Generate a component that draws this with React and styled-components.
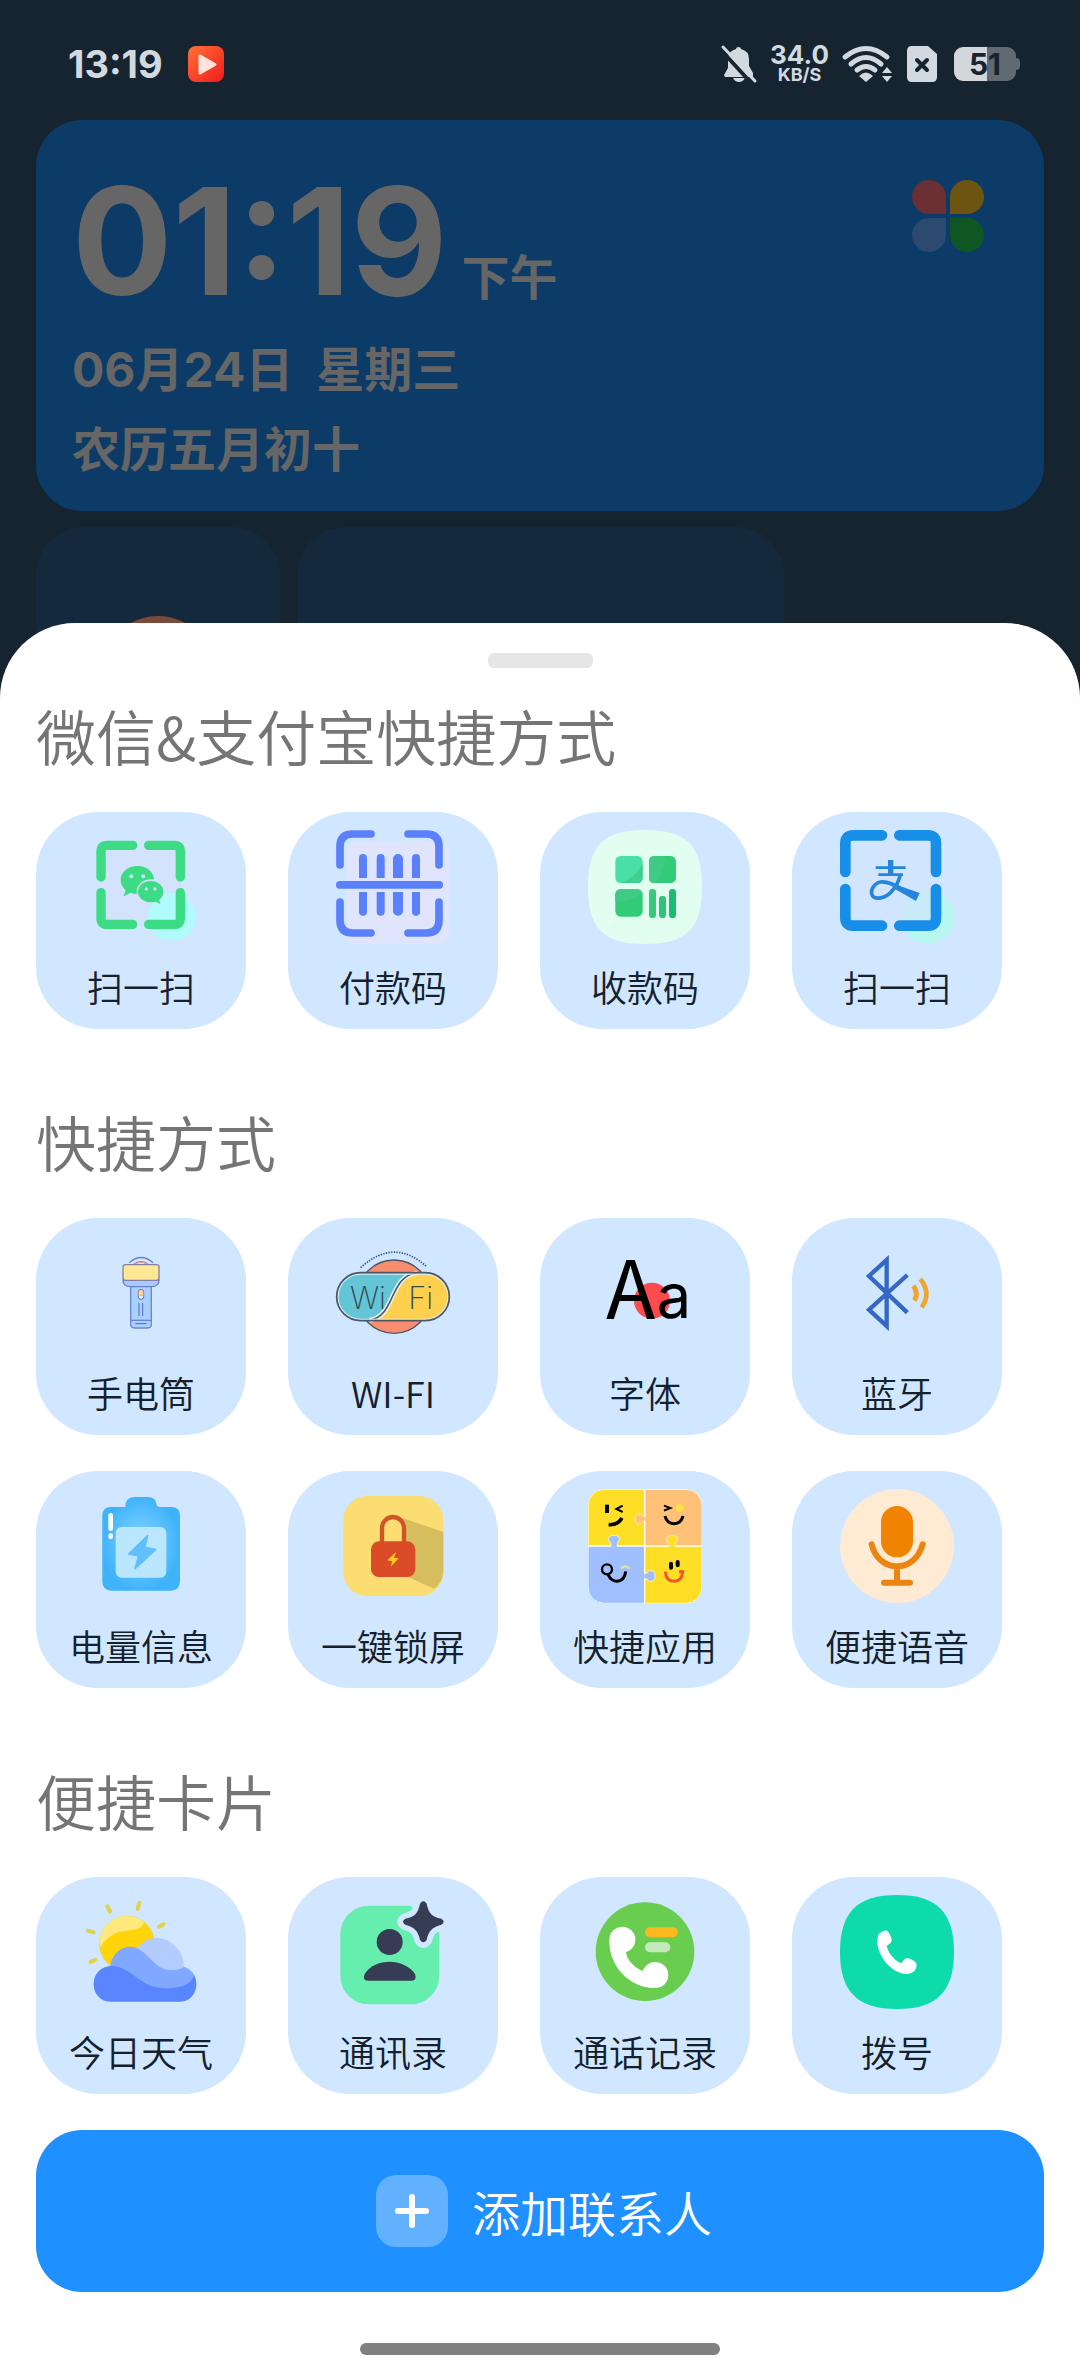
import styled, { createGlobalStyle } from 'styled-components';

const GlobalStyle = createGlobalStyle`
  * {
    box-sizing: border-box;
  }
  body {
    margin: 0;
    background: #162430;
    font-family: 'Noto Sans CJK SC', sans-serif;
  }
  button {
    border: none;
    padding: 0;
    font-family: inherit;
    cursor: pointer;
  }
  svg {
    display: block;
    flex-shrink: 0;
    overflow: visible;
  }
`;
const Page = styled.div`
  min-height: 100vh;
  display: flex;
  flex-direction: column;
`;
const StatusBar = styled.header`
  display: flex;
  align-items: center;
  height: 120px;
  padding: 8px 60px 0 68px;
  color: #d3d9e0;
  font-family: 'Inter', sans-serif;
`;
const StatusTime = styled.time`
  flex: 1;
  display: flex;
  align-items: center;
  gap: 25px;
  font-size: 38px;
  line-height: 40px;
  font-weight: 700;
`;
const StatusIcons = styled.div`
  display: flex;
  align-items: center;
  gap: 13px;
`;
const Speed = styled.div`
  display: flex;
  flex-direction: column;
  align-items: center;
  font-size: 26px;
  line-height: 22px;
  font-weight: 700;
  small {
    font-size: 18px;
    line-height: 18px;
  }
`;
const Battery = styled.div`
  display: flex;
  align-items: center;
  margin-left: 4px;
`;
const BatteryLevel = styled.div`
  width: 62px;
  border-radius: 9px;
  background: linear-gradient(90deg, #d3d6da 54%, #5f6a73 54%);
  color: #162430;
  font-size: 30px;
  line-height: 34px;
  font-weight: 700;
  text-align: center;
`;
const BatteryNub = styled.div`
  width: 4px;
  height: 12px;
  border-radius: 0 4px 4px 0;
  background: #5f6a73;
`;
const ClockCard = styled.section`
  margin: 0 36px;
  padding: 46px 36px 21px;
  border-radius: 46px;
  background: #0b3b66;
  color: #666;
  font-family: 'Inter', 'Noto Sans CJK SC', sans-serif;
  font-weight: 700;
  display: flex;
  justify-content: space-between;
`;
const Clock = styled.div`
  display: flex;
  align-items: baseline;
  gap: 14px;
  margin-bottom: 14px;
  font-size: 48px;
  line-height: 48px;
  time {
    font-size: 149px;
    line-height: 150px;
  }
`;
const DateLine = styled.p`
  margin: 0;
  font-size: 48px;
  line-height: 80px;
  white-space: pre;
`;
const PetalButton = styled.button`
  align-self: flex-start;
  margin: 14px 24px 0 0;
  background: none;
`;
const HomeRow = styled.div`
  display: grid;
  grid-template-columns: 1fr 2fr 1fr;
  gap: 17px;
  height: 156px;
  margin: 16px 36px 0;
`;
const HomeTile = styled.div`
  padding-top: 89px;
  border-radius: 48px 48px 0 0;
  background: #15293d;
`;
const HomeAvatar = styled.div`
  width: 112px;
  height: 67px;
  margin: 0 auto;
  border-radius: 56px 56px 0 0;
  background: #7c4a38;
`;
const Sheet = styled.main`
  position: relative;
  flex: 1;
  display: flex;
  flex-direction: column;
  margin-top: -60px;
  padding: 30px 36px 21px;
  border-radius: 75px 75px 0 0;
  background: #fff;
`;
const Handle = styled.div`
  width: 105px;
  height: 15px;
  margin: 0 auto 34px;
  border-radius: 6px;
  background: #e6e6e6;
`;
const Group = styled.section`
  & + & {
    margin-top: 79px;
  }
`;
const GroupTitle = styled.h2`
  margin: 0 0 44px;
  color: #757575;
  font-size: 60px;
  line-height: 66px;
  font-weight: 350;
`;
const Grid = styled.div`
  display: grid;
  grid-template-columns: repeat(4, 1fr);
  gap: 36px 42px;
  padding-right: 42px;
`;
const Tile = styled.button`
  display: flex;
  flex-direction: column;
  align-items: center;
  gap: 16px;
  padding: 18px 0 17px;
  border-radius: 62px;
  background: #d0e7ff;
  color: #14202b;
  font-size: 36px;
  line-height: 52px;
  font-weight: 350;
  white-space: nowrap;
`;
const AddButton = styled.button`
  display: flex;
  align-items: center;
  justify-content: center;
  gap: 24px;
  height: 162px;
  margin-top: 36px;
  padding-left: 8px;
  border-radius: 46px;
  background: #1e90ff;
  color: #fff;
  font-size: 48px;
  font-weight: 350;
`;
const NavPill = styled.div`
  width: 360px;
  height: 12px;
  margin: auto auto 0;
  border-radius: 6px;
  background: #808080;
`;

const Icon = ({ box, children }) => (
  <svg width='114' height='114' viewBox={`${box} 342 342`} fill='none' aria-hidden='true'>
    {children}
  </svg>
);

// four corner strokes of a scan frame
const Frame = ({ x1, y1, x2, y2, arm, r, w, color }) => (
  <path
    d={`M${x1} ${y1 + arm}V${y1 + r}Q${x1} ${y1} ${x1 + r} ${y1}H${x1 + arm}
      M${x2 - arm} ${y1}H${x2 - r}Q${x2} ${y1} ${x2} ${y1 + r}V${y1 + arm}
      M${x1} ${y2 - arm}V${y2 - r}Q${x1} ${y2} ${x1 + r} ${y2}H${x1 + arm}
      M${x2 - arm} ${y2}H${x2 - r}Q${x2} ${y2} ${x2} ${y2 - r}V${y2 - arm}`}
    stroke={color}
    strokeWidth={w}
    strokeLinecap='round'
  />
);

const WechatScan = () => (
  <Icon box='192 120'>
    <rect x='240' y='162' width='246' height='246' fill='#d3e2fd' />
    <circle cx='456' cy='380' r='72' fill='#b0fcfd' />
    <Frame x1={243} y1={166} x2={481} y2={403} arm={95} r={18} w={28} color='#3ddc84' />
    <path d='M318 296L311 319L336 306Z' fill='#3ddc84' />
    <ellipse cx='352' cy='270' rx='50' ry='42' fill='#3ddc84' />
    <ellipse cx='392' cy='305' rx='42' ry='37' fill='#d3e2fd' />
    <ellipse cx='392' cy='305' rx='38' ry='32' fill='#3ddc84' />
    <path d='M401 333L421 342L416 324Z' fill='#3ddc84' />
    <g fill='#d3e2fd'>
      <circle cx='334' cy='259' r='6' />
      <circle cx='370' cy='259' r='6' />
      <circle cx='379' cy='297' r='5' />
      <circle cx='405' cy='297' r='5' />
    </g>
  </Icon>
);

const PayCode = () => (
  <Icon box='948 120'>
    <rect x='980' y='155' width='310' height='307' rx='34' fill='#e0e4fd' />
    <Frame x1={960} y1={132} x2={1257} y2={429} arm={93} r={38} w={23} color='#5a80fb' />
    <g fill='#5a80fb'>
      <rect x='948' y='273' width='321' height='23' rx='11' />
      <path d='M1017 264V204a12 12 0 0 1 24 0V264ZM1070 264V204a12 12 0 0 1 24 0V264ZM1119 264V207a15 15 0 0 1 30 0V264ZM1176 264V204a12 12 0 0 1 24 0V264Z' />
      <path d='M1017 306V365a12 12 0 0 0 24 0V306ZM1070 306V365a12 12 0 0 0 24 0V306ZM1119 306V362a15 15 0 0 0 30 0V306ZM1176 306V365a12 12 0 0 0 24 0V306Z' />
    </g>
  </Icon>
);

const ReceiveCode = () => (
  <Icon box='204 120'>
    <path d='M375 120C500 120 546 166 546 291S500 462 375 462 204 416 204 291 250 120 375 120Z' fill='#e0fff1' />
    <rect x='286' y='198' width='82' height='81' rx='16' fill='#49dfa6' />
    <path d='M368 222Q346 264 302 279H352Q368 279 368 263Z' fill='#3fcf8e' />
    <rect x='387' y='198' width='81' height='81' rx='16' fill='#32cb78' />
    <path d='M403 198H434Q436 244 406 279H403Q387 279 387 263V214Q387 198 403 198Z' fill='#40ca86' />
    <rect x='286' y='298' width='82' height='82' rx='16' fill='#32cb78' />
    <path d='M302 298H352Q364 298 368 310Q330 334 286 336V314Q286 298 302 298Z' fill='#40ca86' />
    <rect x='387' y='297' width='21' height='87' rx='10' fill='#38c97d' />
    <rect x='417' y='318' width='21' height='66' rx='10' fill='#2cc478' />
    <rect x='447' y='297' width='21' height='87' rx='10' fill='#18be70' />
  </Icon>
);

const AlipayScan = () => (
  <Icon box='960 120'>
    <circle cx='1222' cy='380' r='81' fill='#b8f6f2' />
    <rect x='980' y='142' width='264' height='262' fill='#d3e4fd' opacity='0.6' />
    <Frame x1={976} y1={136} x2={1248} y2={407} arm={110} r={24} w={32} color='#178ee8' />
    <g stroke='#2386dc'>
      <path d='M1112 210V256' strokeWidth='16' />
      <path d='M1067 233H1157M1075 254H1149' strokeWidth='8' />
      <path
        d='M1141 254Q1134 285 1114 305C1096 325 1067 330 1058 318C1048 302 1062 280 1082 276C1108 272 1136 293 1160 306'
        strokeWidth='11'
      />
    </g>
    <path d='M1122 282L1199 309L1188 333L1126 298Z' fill='#2386dc' />
  </Icon>
);

const Flashlight = () => (
  <Icon box='192 108'>
    <path d='M328 188Q363 157 399 188M340 194Q363 176 386 194' stroke='#6f7cc8' strokeWidth='4' />
    <path d='M345 193Q363 180 381 193' stroke='#e0a287' strokeWidth='4' />
    <path d='M332 258H394V372Q394 384 382 384H344Q332 384 332 372Z' fill='#a9d0ff' stroke='#6a86d4' strokeWidth='4' />
    <path d='M332 361H394' stroke='#6a86d4' strokeWidth='4' />
    <path d='M346 371H380' stroke='#4f68b8' strokeWidth='3' />
    <path d='M309 240H417Q417 260 395 260H331Q309 260 309 240Z' fill='#a9cbfb' stroke='#6a7fcb' strokeWidth='4' />
    <rect x='309' y='194' width='108' height='47' rx='8' fill='#ffe793' stroke='#8580a8' strokeWidth='4' />
    <rect x='355' y='268' width='16' height='30' rx='8' fill='#eef4ff' stroke='#4f68b8' strokeWidth='3' />
    <path d='M356 287V276a7 7 0 0 1 14 0V287Z' fill='#ffd6a8' stroke='#d39a78' strokeWidth='2' />
    <path d='M357 309V348M368 309V348' stroke='#4f68b8' strokeWidth='3' />
  </Icon>
);

const Wifi = () => (
  <Icon box='948 108'>
    <path d='M1022 203Q1122 111 1221 201' stroke='#2f4f94' strokeWidth='5' strokeDasharray='4 4' />
    <circle cx='1122' cy='290' r='110' fill='#f98d70' stroke='#4b5666' strokeWidth='4' />
    <rect x='950' y='218' width='338' height='144' rx='72' fill='#64c5d6' />
    <path
      d='M1060 362C1128 350 1106 218 1212 218H1216A72 72 0 0 1 1216 362Z'
      fill='#ffd04d'
    />
    <path d='M1048 361C1128 350 1106 226 1192 219' stroke='#e6f4f5' strokeWidth='14' />
    <path d='M1048 361C1128 350 1106 226 1192 219' stroke='#4b5666' strokeWidth='5' />
    <rect x='954' y='222' width='330' height='136' rx='68' stroke='#dcecef' strokeWidth='4' />
    <rect x='950' y='218' width='338' height='144' rx='72' stroke='#4b5666' strokeWidth='5' />
    <g fontFamily='Inter, sans-serif' fontWeight='200' fontSize='92' fill='#33474f'>
      <text x='990' y='326'>Wi</text>
      <text x='1165' y='326'>Fi</text>
    </g>
  </Icon>
);

const Fonts = () => (
  <Icon box='204 108'>
    <circle cx='396' cy='302' r='54' fill='#ff4a4f' />
    <text x='258' y='356' fontSize='243' fontFamily='"Noto Sans CJK SC", sans-serif' fontWeight='400' fill='#000'>
      A
    </text>
    <text x='410' y='353' fontSize='184' fontFamily='Inter, sans-serif' fontWeight='400' fill='#000'>
      a
    </text>
  </Icon>
);

const Bluetooth = () => (
  <Icon box='960 108'>
    <path d='M1162 225L1047 329L1100 378V180L1047 228L1162 338' stroke='#3567c4' strokeWidth='13' />
    <path d='M1180 257Q1197 280 1183 302' stroke='#f0a62c' strokeWidth='15' />
    <path d='M1201 237Q1235 279 1205 322' stroke='#f0a62c' strokeWidth='14' />
  </Icon>
);

const BatteryInfo = () => (
  <Icon box='192 117'>
    <defs>
      <radialGradient id='cell'>
        <stop offset='0' stopColor='#8ad6ff' />
        <stop offset='1' stopColor='#3fb3fa' />
      </radialGradient>
    </defs>
    <path
      d='M316 171Q316 141 344 141H384Q408 141 410 164Q412 171 420 171H454Q480 171 480 197V394Q480 422 452 422H275Q247 422 247 394V197Q247 171 273 171Z'
      fill='url(#cell)'
    />
    <rect x='287' y='231' width='152' height='152' rx='18' fill='#bbe6ff' />
    <path
      d='M383 257L326 312L356 318L345 356L407 299L374 292Z'
      fill='#5fc0fd'
      stroke='#5fc0fd'
      strokeWidth='5'
      strokeLinejoin='round'
    />
    <rect x='265' y='189' width='14' height='54' rx='7' fill='#fff' />
    <rect x='265' y='250' width='14' height='17' rx='7' fill='#fff' />
  </Icon>
);

const LockScreen = () => (
  <Icon box='948 117'>
    <rect x='970' y='138' width='300' height='300' rx='72' fill='#fbdd71' />
    <path d='M1146 203L1270 246V366Q1268 396 1243 416L1162 380Z' fill='#d6be5e' />
    <path d='M1092 276V234a27 27 0 0 1 54 0V276Z' fill='#fbdd71' />
    <path d='M1086 280V234a33 33 0 0 1 66 0V280' stroke='#d4522a' strokeWidth='13' />
    <rect x='1053' y='274' width='133' height='107' rx='24' fill='#da4c28' />
    <path d='M1128 306L1102 331L1117 334L1112 350L1136 325L1122 323Z' fill='#ffca1c' />
  </Icon>
);

const QuickApps = () => (
  <Icon box='204 117'>
    <clipPath id='puzzle'>
      <rect x='204' y='118' width='342' height='342' rx='48' />
    </clipPath>
    <g clipPath='url(#puzzle)'>
      <path d='M204 118H374V288H204ZM374 288H546V460H374Z' fill='#ffde26' />
      <path d='M374 118H546V288H374Z' fill='#ffc078' />
      <path d='M204 288H374V460H204Z' fill='#9fbfff' />
      <path d='M374 118V460' stroke='#fff' strokeWidth='4' />
      <path d='M204 288H546' stroke='#fff' strokeWidth='5' />
      <rect x='204' y='118' width='342' height='342' rx='48' stroke='#fff' strokeWidth='3' />
    </g>
    <g stroke='#fff' strokeWidth='2'>
      <path d='M272 290Q278 280 266 272Q262 258 280 256Q300 256 298 270Q288 280 292 290' fill='#9fbfff' />
      <path d='M446 290Q450 280 440 272Q438 256 456 256Q474 256 472 272Q464 280 466 290' fill='#ffde26' />
      <path d='M373 370Q382 374 386 362Q404 360 405 378Q404 396 388 394Q382 384 373 386' fill='#9fbfff' />
      <path d='M376 198Q368 204 362 192Q346 190 345 207Q346 224 360 222Q368 210 376 214' fill='#ffc078' />
    </g>
    <g stroke='#000' strokeWidth='9'>
      <path d='M261 164V189' strokeWidth='12' />
      <path d='M308 167L289 177L308 186' strokeWidth='6' />
      <path d='M266 224Q292 226 306 204' strokeWidth='11' />
      <path d='M432 167L451 174L432 182' strokeWidth='6' />
      <path d='M435 198Q440 220 462 221Q484 220 489 198' />
      <circle cx='261' cy='358' r='15' strokeWidth='7' />
      <path d='M264 374Q274 394 291 394Q314 392 317 364' />
      <path d='M453 341V353M473 336V346' strokeWidth='12' strokeLinecap='round' />
    </g>
    <circle cx='479' cy='173' r='12' fill='#ffde4a' />
    <path d='M303 356Q316 342 329 356' stroke='#dbe49a' strokeWidth='7' />
    <path d='M436 365Q438 394 462 394Q486 394 488 365H477' stroke='#f0562c' strokeWidth='9' />
  </Icon>
);

const Voice = () => (
  <Icon box='960 117'>
    <circle cx='1131' cy='288' r='171' fill='#ffead4' />
    <rect x='1083' y='168' width='96' height='154' rx='48' fill='#f08300' />
    <path
      d='M1055 283C1064 322 1094 349 1131 349S1198 322 1208 283M1131 349V398M1092 398H1170'
      stroke='#ea8413'
      strokeWidth='18'
      strokeLinecap='round'
    />
  </Icon>
);

const Weather = () => (
  <Icon box='192 105'>
    <path
      d='M262 139L270 155M358 128L353 147M417 200L431 192M203 212L221 217M211 307L226 299'
      stroke='#e0d14e'
      strokeWidth='12'
      strokeLinecap='round'
    />
    <circle cx='321' cy='251' r='83' fill='#ffd50a' stroke='#c9cf7a' />
    <path d='M241 262C232 208 272 168 322 168Q352 170 372 186C364 214 330 208 296 216Q262 226 241 262Z' fill='#ffe97c' />
    <path d='M350 266Q376 233 410 233C455 235 492 275 492 322C470 345 420 336 350 266Z' fill='#b3ccff' />
    <path
      d='M270 326C272 288 298 260 330 260C374 260 392 312 432 326C455 334 480 330 492 320Q515 328 524 348L500 400H330Z'
      fill='#80a8ff'
    />
    <path
      d='M272 318C324 316 350 366 402 380C450 392 512 384 522 346Q529 356 529 375C528 404 506 425 482 425H270C240 425 221 400 221 372C221 342 242 320 272 318Z'
      fill='#5985ff'
    />
  </Icon>
);

const starPath =
  'M1200 131Q1210 117 1220 131C1226 160 1236 170 1264 176Q1278 185 1264 194C1236 202 1226 212 1220 240Q1210 254 1200 240C1194 212 1184 202 1156 194Q1142 185 1156 176C1184 170 1194 160 1200 131Z';

const Contacts = () => (
  <Icon box='948 105'>
    <rect x='961' y='137' width='297' height='296' rx='86' fill='#66eeaf' />
    <path d='M1172 137H1262V216H1256Z' fill='#d0e7ff' />
    <path d={starPath} fill='#d0e7ff' stroke='#d0e7ff' strokeWidth='34' strokeLinejoin='round' />
    <path d={starPath} fill='#363c54' />
    <circle cx='1109' cy='246' r='39' fill='#363c54' />
    <path d='M1044 362Q1026 362 1034 342C1050 316 1080 305 1109 305S1170 318 1185 342Q1192 362 1174 362Z' fill='#363c54' />
  </Icon>
);

const CallLog = () => (
  <Icon box='204 105'>
    <circle cx='375' cy='275' r='148' fill='#69cd50' />
    <g fill='#fff'>
      <circle cx='307' cy='239' r='39' />
      <circle cx='406' cy='345' r='39' />
      <path d='M268 240C266 318 330 386 406 384L420 330L368 333C342 324 320 298 318 277L330 250Z' />
    </g>
    <rect x='375' y='202' width='99' height='30' rx='15' fill='#ffb920' />
    <rect x='375' y='247' width='76' height='30' rx='15' fill='#c3ebb9' />
  </Icon>
);

const Dial = () => (
  <Icon box='960 105'>
    <path d='M1131 105C1250 105 1302 157 1302 276S1250 447 1131 447 960 395 960 276 1012 105 1131 105Z' fill='#0ddcaa' />
    <path
      d='M1098 211Q1106 212 1115 237Q1117 250 1100 257C1104 280 1125 303 1145 310Q1152 294 1164 294Q1188 302 1190 314Q1190 338 1162 342C1120 344 1070 290 1072 240Q1072 216 1098 211Z'
      fill='#fff'
    />
  </Icon>
);

const groups = [
  {
    title: '微信&支付宝快捷方式',
    items: [
      ['扫一扫', WechatScan],
      ['付款码', PayCode],
      ['收款码', ReceiveCode],
      ['扫一扫', AlipayScan],
    ],
  },
  {
    title: '快捷方式',
    items: [
      ['手电筒', Flashlight],
      ['WI-FI', Wifi],
      ['字体', Fonts],
      ['蓝牙', Bluetooth],
      ['电量信息', BatteryInfo],
      ['一键锁屏', LockScreen],
      ['快捷应用', QuickApps],
      ['便捷语音', Voice],
    ],
  },
  {
    title: '便捷卡片',
    items: [
      ['今日天气', Weather],
      ['通讯录', Contacts],
      ['通话记录', CallLog],
      ['拨号', Dial],
    ],
  },
];

const App = () => (
  <Page>
    <GlobalStyle />
    <StatusBar>
      <StatusTime>
        13:19
        <svg width='36' height='36' viewBox='0 0 36 36'>
          <defs>
            <linearGradient id='play' x2='1' y2='1'>
              <stop offset='0' stopColor='#ff7038' />
              <stop offset='1' stopColor='#f01c1c' />
            </linearGradient>
          </defs>
          <rect width='36' height='36' rx='8' fill='url(#play)' />
          <path d='M12 10V27L27 18.5Z' fill='#ffe3dc' stroke='#ffe3dc' strokeWidth='3' strokeLinejoin='round' />
        </svg>
      </StatusTime>
      <StatusIcons>
        <svg width='36' height='36' viewBox='0 0 36 36' fill='currentColor'>
          <path d='M15 3Q15 1 17.500 1Q20 1 20 3Q28 5 28 13V20L32 27V31H4L3 29L7 22V13Q7 5 15 3Z' />
          <path d='M12 32H24Q22 36 18 36T12 32Z' />
          <path d='M0 4L32 39' stroke='#162430' strokeWidth='4' />
          <path d='M2 1L34 35' stroke='currentColor' strokeWidth='3' strokeLinecap='round' />
        </svg>
        <Speed>
          34.0
          <small>KB/S</small>
        </Speed>
        <svg width='52' height='36' viewBox='0 0 52 36' fill='currentColor'>
          <g fill='none' stroke='currentColor' strokeWidth='5' strokeLinecap='round'>
            <path d='M3 11Q24 -6 45 11' />
            <path d='M9 18Q24 5 39 18' />
            <path d='M15 24Q24 17 33 24' />
          </g>
          <path d='M17 30Q24 23 31 30L24 36Z' />
          <path d='M45 21L50 27H40ZM45 36L50 30H40Z' />
        </svg>
        <svg width='30' height='36' viewBox='0 0 30 36'>
          <path d='M5 0H21L30 8V31Q30 36 25 36H5Q0 36 0 31V5Q0 0 5 0Z' fill='currentColor' />
          <path d='M10 14L20 24M20 14L10 24' stroke='#162430' strokeWidth='4' strokeLinecap='round' />
        </svg>
        <Battery>
          <BatteryLevel>51</BatteryLevel>
          <BatteryNub />
        </Battery>
      </StatusIcons>
    </StatusBar>
    <ClockCard>
      <div>
        <Clock>
          <time>01:19</time>
          <span>下午</span>
        </Clock>
        <DateLine>06月24日{'  '}星期三</DateLine>
        <DateLine>农历五月初十</DateLine>
      </div>
      <PetalButton aria-label='应用'>
        <svg width='72' height='72' viewBox='0 0 72 72'>
          <path d='M34 34H17A17 17 0 1 1 34 17Z' fill='#6b3034' />
          <path d='M38 34V17A17 17 0 1 1 55 34Z' fill='#6b5511' />
          <path d='M34 38V55A17 17 0 1 1 17 38Z' fill='#2c4a70' />
          <path d='M38 38H55A17 17 0 1 1 38 55Z' fill='#0f5722' />
        </svg>
      </PetalButton>
    </ClockCard>
    <HomeRow>
      <HomeTile>
        <HomeAvatar />
      </HomeTile>
      <HomeTile />
    </HomeRow>
    <Sheet>
      <Handle />
      {groups.map(group => (
        <Group key={group.title}>
          <GroupTitle>{group.title}</GroupTitle>
          <Grid>
            {group.items.map(([label, Picture], i) => (
              <Tile key={i}>
                <Picture />
                {label}
              </Tile>
            ))}
          </Grid>
        </Group>
      ))}
      <AddButton>
        <svg width='72' height='72' viewBox='0 0 72 72'>
          <rect width='72' height='72' rx='20' fill='#62b1ff' />
          <path d='M36 22V50M22 36H50' stroke='#fff' strokeWidth='6' strokeLinecap='round' />
        </svg>
        添加联系人
      </AddButton>
      <NavPill />
    </Sheet>
  </Page>
);

export default App;
